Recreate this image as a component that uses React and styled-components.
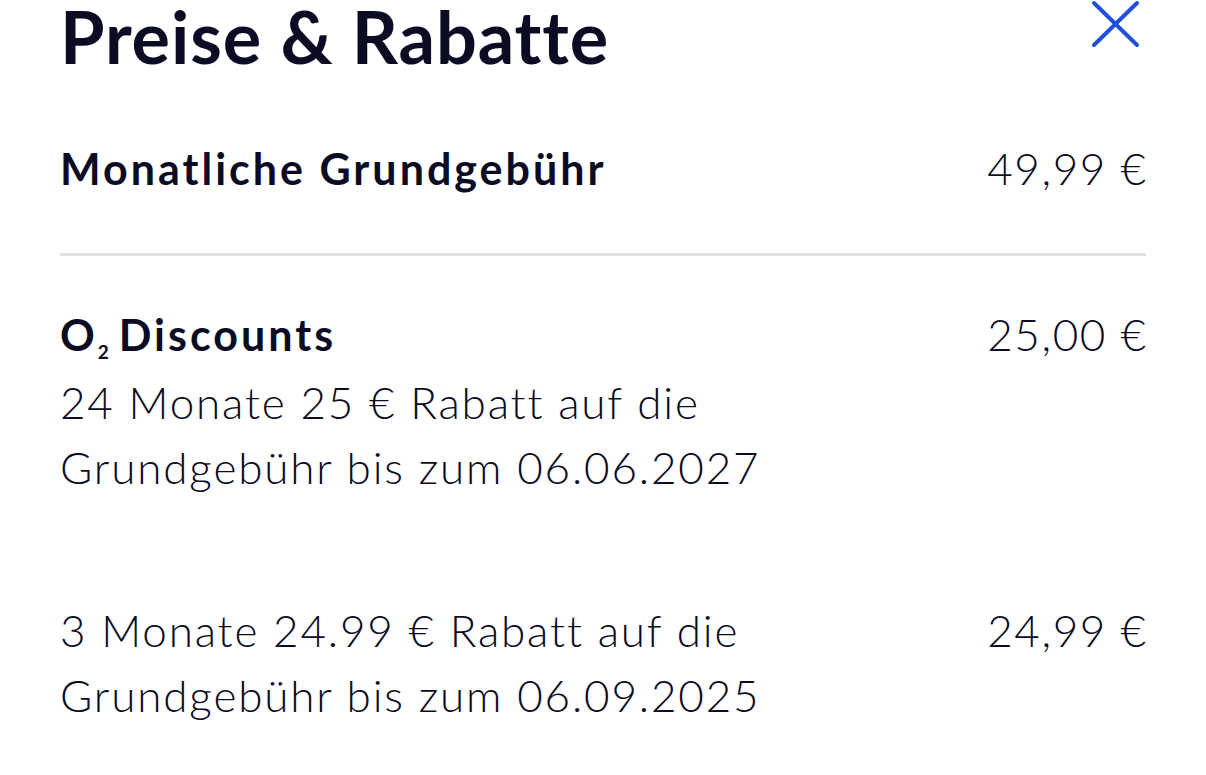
import React from "react";
import styled, { createGlobalStyle } from "styled-components";

const Global = createGlobalStyle`
  html, body {
    margin: 0;
    padding: 0;
    background: #ffffff;
  }
  body {
    font-family: Lato, "Open Sans", "Noto Sans", sans-serif;
    color: #0b0b24;
    -webkit-font-smoothing: antialiased;
  }
`;

const Page = styled.div`
  padding: 0 60px;
  box-sizing: border-box;
  width: 1206px;
`;

const Header = styled.header`
  display: flex;
  justify-content: space-between;
  align-items: flex-start;
`;

const Title = styled.h1`
  margin: 0;
  font-size: 72px;
  line-height: 72px;
  font-weight: 700;
  letter-spacing: 0.9px;
`;

const CloseButton = styled.button`
  border: 0;
  background: transparent;
  padding: 0;
  width: 60px;
  height: 50px;
  cursor: pointer;
  display: block;
  svg {
    display: block;
  }
`;

const Section = styled.section`
  padding: ${(p) => p.$pt || 0}px 0 ${(p) => p.$pb || 0}px;
  border-bottom: ${(p) => (p.$divider ? "3px solid #e3e3e6" : "none")};
`;

const Row = styled.div`
  display: flex;
  justify-content: space-between;
  align-items: ${(p) => p.$align || "baseline"};
  margin-top: ${(p) => p.$mt || 0}px;
`;

const Label = styled.div`
  font-size: 43px;
  line-height: 48px;
  font-weight: 700;
  letter-spacing: 3px;
`;

const Sub = styled.span`
  font-size: 19px;
  letter-spacing: 0;
  vertical-align: -8px;
  margin: 0 10px 0 0;
`;

const Price = styled.div`
  font-size: 44px;
  line-height: 65px;
  font-weight: 300;
  letter-spacing: 1.6px;
  margin-right: -1.6px;
  white-space: nowrap;
`;

const Desc = styled.p`
  margin: ${(p) => p.$mt || 0}px 0 0;
  font-size: 44px;
  line-height: 65px;
  font-weight: 300;
  letter-spacing: 1.85px;
`;

function CloseIcon() {
  return (
    <svg width="60" height="50" viewBox="0 0 60 50">
      <path
        d="M8 3 L51 45 M51 3 L8 45"
        stroke="#1f4fdc"
        strokeWidth="4"
        strokeLinecap="round"
        fill="none"
      />
    </svg>
  );
}

export default function App() {
  return (
    <>
      <Global />
      <Page>
        <Header>
          <Title>Preise &amp; Rabatte</Title>
          <CloseButton aria-label="Schließen">
            <CloseIcon />
          </CloseButton>
        </Header>

        <Section $pt={64} $pb={52} $divider>
          <Row>
            <Label>Monatliche Grundgebühr</Label>
            <Price>49,99 €</Price>
          </Row>
        </Section>

        <Section $pt={46}>
          <Row>
            <Label>
              O<Sub>2</Sub>Discounts
            </Label>
            <Price>25,00 €</Price>
          </Row>
          <Desc $mt={-6}>
            24 Monate 25 € Rabatt auf die
            <br />
            Grundgebühr bis zum 06.06.2027
          </Desc>
          <Row $align="flex-start" $mt={98}>
            <Desc>
              3 Monate 24.99 € Rabatt auf die
              <br />
              Grundgebühr bis zum 06.09.2025
            </Desc>
            <Price>24,99 €</Price>
          </Row>
        </Section>
      </Page>
    </>
  );
}
